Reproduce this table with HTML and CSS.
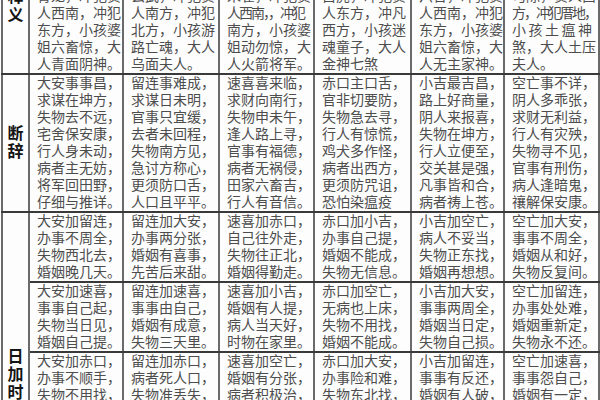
FILE: index.html
```html
<!DOCTYPE html>
<html lang="zh">
<head>
<meta charset="utf-8">
<title>小六壬断辞表</title>
<link rel="stylesheet" href="styles.css">
</head>
<body>
<div class="page">
<table class="sheet">
<colgroup>
<col class="c-label"><col class="c1"><col class="c2"><col class="c3"><col class="c4"><col class="c5"><col class="c6">
</colgroup>
<tr>
<td class="label">释<br>义</td>
<td>青龙，冲犯贵<br>人西南，冲犯<br>东方，小孩婆<br>姐六畜惊，大<br>人青面阴神。</td>
<td>玄武，冲犯贵<br>人南方，冲犯<br>北方，小孩游<br>路亡魂，大人<br>乌面夫人。</td>
<td>朱雀，冲犯贵<br><span class="tight">人西南，，冲犯</span><br>南方，小孩婆<br>姐动勿惊，大<br>人火箭将军。</td>
<td>白虎，冲犯贵<br>人东方，冲凡<br>西方，小孩迷<br>魂童子，大人<br>金神七煞</td>
<td>六合，冲犯贵<br>人西南，冲犯<br>东方，小孩婆<br>姐六畜惊，大<br>人无主家神。</td>
<td>勾陈，贵人西<br><span class="tight">方，冲犯厝地，</span><br><span class="wide">小孩土瘟神</span><br>煞，大人土压<br>夫人。</td>
</tr>
<tr>
<td class="label mid">断<br>辞</td>
<td>大安事事昌，<br>求谋在坤方，<br>失物去不远，<br>宅舍保安康，<br>行人身未动，<br>病者主无妨，<br>将军回田野，<br>仔细与推详。</td>
<td>留连事难成，<br>求谋日未明，<br>官事只宜缓，<br>去者未回程，<br>失物南方见，<br>急讨方称心，<br>更须防口舌，<br>人口且平平。</td>
<td>速喜喜来临，<br>求财向南行，<br>失物申未午，<br>逢人路上寻，<br>官事有福德，<br>病者无祸侵，<br>田家六畜吉，<br>行人有音信。</td>
<td>赤口主口舌，<br>官非切要防，<br>失物急去寻，<br>行人有惊慌，<br>鸡犬多作怪，<br>病者出西方，<br>更须防咒诅，<br>恐怕染瘟疫</td>
<td>小吉最吉昌，<br>路上好商量，<br>阴人来报喜，<br>失物在坤方，<br>行人立便至，<br>交关甚是强，<br>凡事皆和合，<br>病者祷上苍。</td>
<td>空亡事不详，<br>阴人多乖张，<br>求财无利益，<br>行人有灾殃，<br>失物寻不见，<br>官事有刑伤，<br>病人逢暗鬼，<br>禳解保安康。</td>
</tr>
<tr>
<td class="label lower" rowspan="3">日<br>加<br>时</td>
<td>大安加留连，<br>办事不周全，<br>失物西北去，<br>婚姻晚几天。</td>
<td>留连加大安，<br>办事两分张，<br>婚姻有喜事，<br>先苦后来甜。</td>
<td>速喜加赤口，<br>自己往外走，<br>失物往正北，<br>婚姻得勤走。</td>
<td>赤口加小吉，<br>办事自己提，<br>婚姻不能成，<br>失物无信息。</td>
<td>小吉加空亡，<br>病人不妥当，<br>失物正东找，<br>婚姻再想想。</td>
<td>空亡加大安，<br>事事不周全，<br>婚姻从和好，<br>失物反复间。</td>
</tr>
<tr>
<td>大安加速喜，<br>事事自己起，<br>失物当日见，<br>婚姻自己提。</td>
<td>留连加速喜，<br>事事由自己，<br>婚姻有成意，<br>失物三天里。</td>
<td>速喜加小吉，<br>婚姻有人提，<br>病人当天好，<br>时物在家里。</td>
<td>赤口加空亡，<br>无病也上床，<br>失物不用找，<br>婚姻不能成。</td>
<td>小吉加大安，<br>事事两周全，<br>婚姻当日定，<br>失物自己损。</td>
<td>空亡加留连，<br>办事处处难，<br>婚姻重新定，<br>失物永不还。</td>
</tr>
<tr>
<td>大安加赤口，<br>办事不顺手，<br>失物不用找，<br>婚姻要等待。</td>
<td>留连加赤口，<br>病者死人口，<br>失物准丢失，<br>婚姻有变化。</td>
<td>速喜加空亡，<br>婚姻有分张，<br>病者积极治，<br>失物不用找。</td>
<td>赤口加大安，<br>办事险和难，<br>失物东北找，<br>婚姻有阻碍。</td>
<td>小吉加留连，<br>事事有反还，<br>婚姻有人破，<br>失物在西方。</td>
<td>空亡加速喜，<br>事事怨自己，<br>婚姻有一定，<br>失物在原地。</td>
</tr>
</table>
</div>
</body>
</html>
```
FILE: styles.css
```css
html, body {
  margin: 0;
  padding: 0;
  background: #ffffff;
}

.page {
  width: 600px;
  height: 400px;
  overflow: hidden;
  padding-left: 1px;
  box-sizing: border-box;
  background: #fdfdfd;
}

.sheet {
  border-collapse: collapse;
  table-layout: fixed;
  width: 597px;
  margin-top: -14px;
  font-family: "Liberation Serif", "Noto Sans CJK SC", serif;
}

.c-label { width: 27px; }
.c1 { width: 94px; }
.c2 { width: 96px; }
.c3 { width: 95px; }
.c4 { width: 97px; }
.c5 { width: 93px; }
.c6 { width: 95px; }

.sheet td {
  border-top: 2px solid #3a3a3a;
  border-bottom: 2px solid #3a3a3a;
  border-left: 2px solid #6a6a6a;
  border-right: 2px solid #6a6a6a;
  padding: 0 0 0 7px;
  font-size: 14px;
  line-height: 17px;
  color: #4d4d4d;
  white-space: nowrap;
  overflow: hidden;
  vertical-align: top;
}

.sheet td.label {
  padding: 0;
  text-align: center;
  font-family: "Liberation Sans", "Noto Sans CJK SC", sans-serif;
  font-weight: bold;
  font-size: 16px;
  line-height: 18px;
  color: #141414;
}

.sheet td.mid {
  vertical-align: middle;
}

.sheet td.lower {
  padding-top: 135px;
}

.tight {
  letter-spacing: -2px;
}

.wide {
  letter-spacing: 2.5px;
}
```
